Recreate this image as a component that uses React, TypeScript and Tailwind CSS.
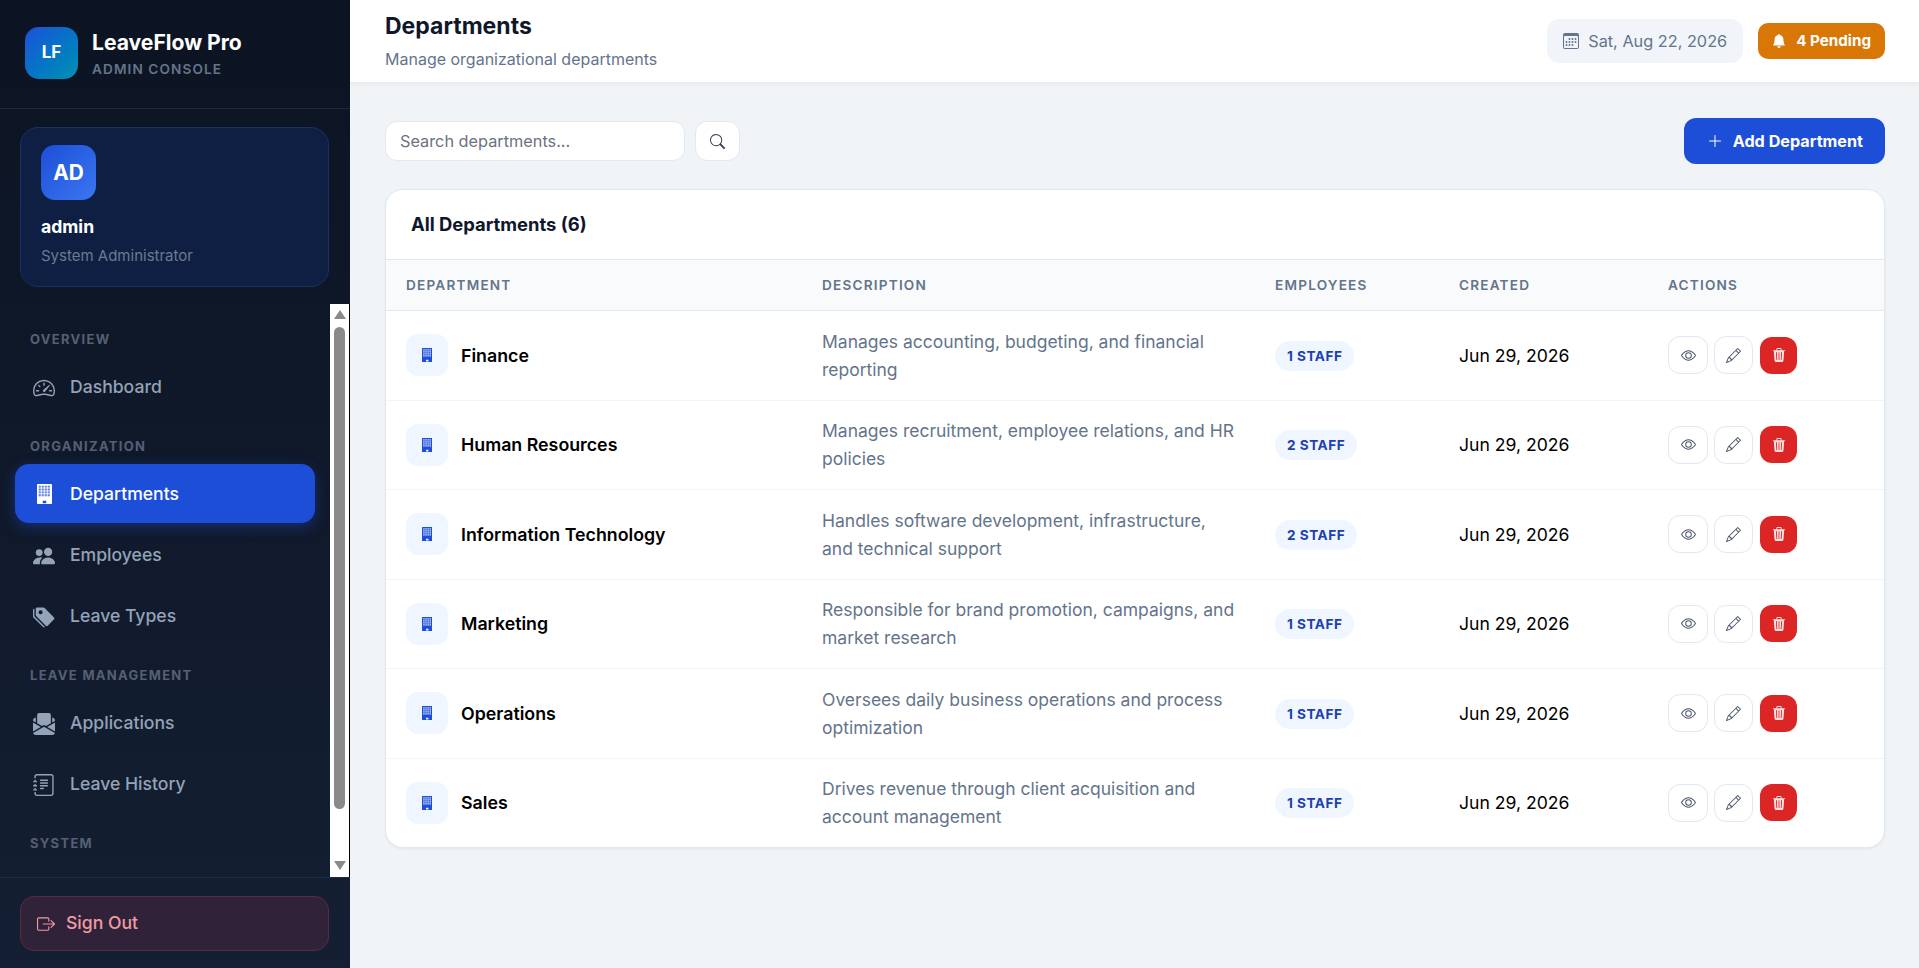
import {
  BsBellFill,
  BsBoxArrowRight,
  BsCalendar3,
  BsEnvelopePaperFill,
  BsEye,
  BsJournalText,
  BsPencil,
  BsPeopleFill,
  BsPlusLg,
  BsSearch,
  BsSpeedometer2,
  BsTagsFill,
  BsTrash3Fill,
} from "react-icons/bs";
import type { IconType } from "react-icons";

const departments = [
  { name: "Finance", lines: ["Manages accounting, budgeting, and financial", "reporting"], staff: 1 },
  { name: "Human Resources", lines: ["Manages recruitment, employee relations, and HR", "policies"], staff: 2 },
  { name: "Information Technology", lines: ["Handles software development, infrastructure,", "and technical support"], staff: 2 },
  { name: "Marketing", lines: ["Responsible for brand promotion, campaigns, and", "market research"], staff: 1 },
  { name: "Operations", lines: ["Oversees daily business operations and process", "optimization"], staff: 1 },
  { name: "Sales", lines: ["Drives revenue through client acquisition and", "account management"], staff: 1 },
];

// window panes of the building icon, 4 columns by 4 rows
const panes = [1.3, 3.6, 5.9, 8.2]
  .flatMap((y) => [1.4, 3.8, 6.2, 8.6].map((x) => `M${x} ${y}h1.6v1.5h-1.6z`))
  .join("");

function BuildingIcon({ size, paneOpacity }: { size: number; paneOpacity: number }) {
  return (
    <svg width={size * 0.75} height={size} viewBox="0 0 12 16" fill="currentColor" className="shrink-0">
      <path
        fillRule="evenodd"
        d={`M.6 0h10.8a.6.6 0 0 1 .6.6v14.8a.6.6 0 0 1-.6.6H.6a.6.6 0 0 1-.6-.6V.6A.6.6 0 0 1 .6 0z${panes}M4.6 13.4v2h2.8v-2z`}
      />
      <path d={panes} opacity={paneOpacity} />
    </svg>
  );
}

function NavLabel({ text, className }: { text: string; className: string }) {
  return (
    <p className={`px-[30px] text-[13px] leading-[20px] font-bold tracking-[1.3px] uppercase text-[#556074] ${className}`}>
      {text}
    </p>
  );
}

const navRow = "mx-[15px] flex h-[59px] items-center gap-[15px] rounded-[14px] px-[18px]";

function NavItem({ icon: Icon, label }: { icon: IconType; label: string }) {
  return (
    <div className={`${navRow} text-[#94a3b8]`}>
      <Icon size={22} className="shrink-0" />
      <span className="text-[17.6px] font-medium">{label}</span>
    </div>
  );
}

function ActiveNavItem({ label }: { label: string }) {
  return (
    <div className={`${navRow} mb-[1px] bg-[#1d4ed8] text-white shadow-[0_4px_14px_rgba(29,78,216,0.4)]`}>
      <div className="flex w-[22px] shrink-0 justify-center">
        <BuildingIcon size={20} paneOpacity={0.3} />
      </div>
      <span className="pt-[2px] text-[17.6px] font-medium">{label}</span>
    </div>
  );
}

function FakeScrollbar() {
  return (
    <div className="flex w-[20px] shrink-0 flex-col items-center border-r border-black bg-white pt-[6px] pb-[7px]">
      <div className="h-0 w-0 border-x-[6px] border-b-[9px] border-x-transparent border-b-[#8a8a8a]" />
      <div className="mt-[8px] h-[482px] w-[11px] rounded-full bg-[#8a8a8a]" />
      <div className="flex-1" />
      <div className="h-0 w-0 border-x-[6px] border-t-[9px] border-x-transparent border-t-[#8a8a8a]" />
    </div>
  );
}

function Sidebar() {
  return (
    <aside className="flex h-[968px] w-[350px] shrink-0 flex-col bg-gradient-to-b from-[#0c1423] to-[#141f33]">
      <div className="flex h-[109px] shrink-0 items-center gap-[14px] border-b border-[#1e293b] px-[25px] pb-[2px]">
        <div className="flex h-[52px] w-[53px] items-center justify-center rounded-[14px] bg-gradient-to-br from-[#1d4ed8] to-[#0891b2] text-[17px] font-bold text-white">
          LF
        </div>
        <div>
          <p className="text-[21.1px] leading-[28px] font-bold text-white">LeaveFlow Pro</p>
          <p className="mt-[3px] text-[13.6px] leading-[18px] font-semibold tracking-[1.1px] text-[#64748b]">ADMIN CONSOLE</p>
        </div>
      </div>

      <div className="pt-[18px] pr-[21px] pb-[17px] pl-[20px]">
        <div className="h-[160px] rounded-[18px] border border-[#1c3160] bg-[#0f1f44] px-[20px] pt-[17px]">
          <div className="flex h-[55px] w-[55px] items-center justify-center rounded-[14px] bg-gradient-to-br from-[#1d4ed8] to-[#3b76f0] text-[20.8px] font-bold text-white">
            AD
          </div>
          <p className="mt-[13px] text-[17.6px] leading-[28px] font-bold text-white">admin</p>
          <p className="mt-[3px] text-[15px] leading-[24px] text-[#6b7a90]">System Administrator</p>
        </div>
      </div>

      <div className="flex min-h-0 flex-1">
        <nav className="min-w-0 flex-1 overflow-hidden pt-[25px]">
          <NavLabel text="Overview" className="" />
          <div className="mt-[9px]"><NavItem icon={BsSpeedometer2} label="Dashboard" /></div>
          <NavLabel text="Organization" className="mt-[19px]" />
          <div className="mt-[8px] flex flex-col gap-[2px]">
            <ActiveNavItem label="Departments" />
            <NavItem icon={BsPeopleFill} label="Employees" />
            <NavItem icon={BsTagsFill} label="Leave Types" />
          </div>
          <NavLabel text="Leave Management" className="mt-[19px]" />
          <div className="mt-[9px] flex flex-col gap-[2px]">
            <NavItem icon={BsEnvelopePaperFill} label="Applications" />
            <NavItem icon={BsJournalText} label="Leave History" />
          </div>
          <NavLabel text="System" className="mt-[19px]" />
        </nav>
        <FakeScrollbar />
      </div>

      <div className="h-[91px] shrink-0 border-t border-[#1f2c44] pt-[18px] pr-[21px] pl-[20px]">
        <div className="flex h-[55px] items-center gap-[11px] rounded-[14px] border border-[#5a2a3f] bg-[#302238] px-[16px] text-[#f09ba3]">
          <BsBoxArrowRight size={18} />
          <span className="text-[17.6px] font-medium">Sign Out</span>
        </div>
      </div>
    </aside>
  );
}

function Header() {
  return (
    <header className="flex h-[82px] shrink-0 items-center justify-between bg-white pr-[34px] pl-[35px] shadow-[0_2px_6px_rgba(15,23,42,0.05)]">
      <div className="pb-[2px]">
        <h1 className="text-[23px] leading-[34px] font-bold text-[#0f172a]">Departments</h1>
        <p className="mt-[3px] text-[16px] leading-[26px] text-[#64748b]">Manage organizational departments</p>
      </div>
      <div className="flex items-center gap-[15px]">
        <div className="flex h-[44px] items-center gap-[9px] rounded-[12px] bg-[#f1f5f9] px-[16px] text-[16.3px] text-[#64748b]">
          <BsCalendar3 size={16} />
          <span>Sat, Aug 22, 2026</span>
        </div>
        <div className="flex h-[36px] items-center gap-[10px] rounded-[10px] bg-[#d97706] px-[14px] text-[15.2px] font-bold text-white">
          <BsBellFill size={14} />
          <span>4 Pending</span>
        </div>
      </div>
    </header>
  );
}

function Toolbar() {
  return (
    <div className="flex items-center justify-between">
      <div className="flex items-center gap-[10px]">
        <div className="flex h-[40px] w-[300px] items-center rounded-[12px] border border-[#e2e8f0] bg-white px-[14px] text-[16.3px] text-[#6b7280]">
          Search departments...
        </div>
        <button className="flex h-[40px] w-[45px] items-center justify-center rounded-[12px] border border-[#e2e8f0] bg-white text-[#334155]">
          <BsSearch size={15} />
        </button>
      </div>
      <button className="flex h-[46px] items-center gap-[10px] rounded-[12px] bg-[#1d4ed8] pr-[22px] pl-[23px] text-[16.2px] font-bold text-white">
        <BsPlusLg size={16} />
        Add Department
      </button>
    </div>
  );
}

function ActionButtons() {
  return (
    <div className="flex items-center gap-[6px]">
      <button className="flex h-[38px] w-[40px] items-center justify-center rounded-[12px] border border-[#e2e8f0] bg-white text-[#475569]">
        <BsEye size={15} />
      </button>
      <button className="flex h-[38px] w-[39px] items-center justify-center rounded-[12px] border border-[#e2e8f0] bg-white text-[#475569]">
        <BsPencil size={15} />
      </button>
      <button className="ml-[1px] flex h-[37px] w-[37px] items-center justify-center rounded-[12px] bg-[#dc2626] text-[#fee2e2]">
        <BsTrash3Fill size={14} />
      </button>
    </div>
  );
}

function DepartmentsTable() {
  return (
    <section className="mt-[25px] overflow-hidden rounded-[18px] border border-[#e2e8f0] bg-white shadow-[0_1px_3px_rgba(15,23,42,0.06)]">
      <h2 className="flex h-[69px] items-center px-[25px] text-[18.4px] font-bold text-[#0f172a]">All Departments (6)</h2>
      <table className="w-full table-fixed border-collapse">
        <thead>
          <tr className="h-[51px] border-y border-[#e2e8f0] bg-[#f8fafc] text-left text-[13.6px] tracking-[1.2px] text-[#64748b]">
            <th className="w-[416px] pl-[20px] font-semibold">DEPARTMENT</th>
            <th className="w-[453px] pl-[20px] font-semibold">DESCRIPTION</th>
            <th className="w-[184px] pl-[20px] font-semibold">EMPLOYEES</th>
            <th className="w-[209px] pl-[20px] font-semibold">CREATED</th>
            <th className="pl-[20px] font-semibold">ACTIONS</th>
          </tr>
        </thead>
        <tbody>
          {departments.map((d) => (
            <tr key={d.name} className="border-b border-[#f1f5f9] last:border-b-0">
              <td className="py-[16px] pl-[20px]">
                <div className="flex items-center gap-[13px]">
                  <div className="flex h-[42px] w-[42px] items-center justify-center rounded-[12px] bg-[#eff6ff] text-[#1d4ed8]">
                    <BuildingIcon size={14} paneOpacity={0.1} />
                  </div>
                  <span className="pt-[2px] text-[17.8px] font-semibold text-black">{d.name}</span>
                </div>
              </td>
              <td className="pt-[16.5px] pb-[15.5px] pl-[20px] text-[17.5px] leading-[28.25px] text-[#64748b]">
                {d.lines[0]}
                <br />
                {d.lines[1]}
              </td>
              <td className="pt-[16.5px] pb-[15.5px] pl-[20px]">
                <span className="inline-flex h-[30px] items-center rounded-full bg-[#eff6ff] px-[12px] text-[13.6px] font-bold tracking-[0.5px] text-[#1e40af]">
                  {d.staff} STAFF
                </span>
              </td>
              <td className="pt-[16.5px] pb-[15.5px] pl-[20px] text-[17.6px] text-black">Jun 29, 2026</td>
              <td className="py-[16px] pl-[20px]">
                <ActionButtons />
              </td>
            </tr>
          ))}
        </tbody>
      </table>
    </section>
  );
}

export default function App() {
  return (
    <div className="flex h-[968px] overflow-hidden bg-[#f0f4f7] font-['Inter',sans-serif]">
      <Sidebar />
      <main className="flex min-w-0 flex-1 flex-col">
        <Header />
        <div className="pt-[36px] pr-[34px] pl-[35px]">
          <Toolbar />
          <DepartmentsTable />
        </div>
      </main>
    </div>
  );
}
